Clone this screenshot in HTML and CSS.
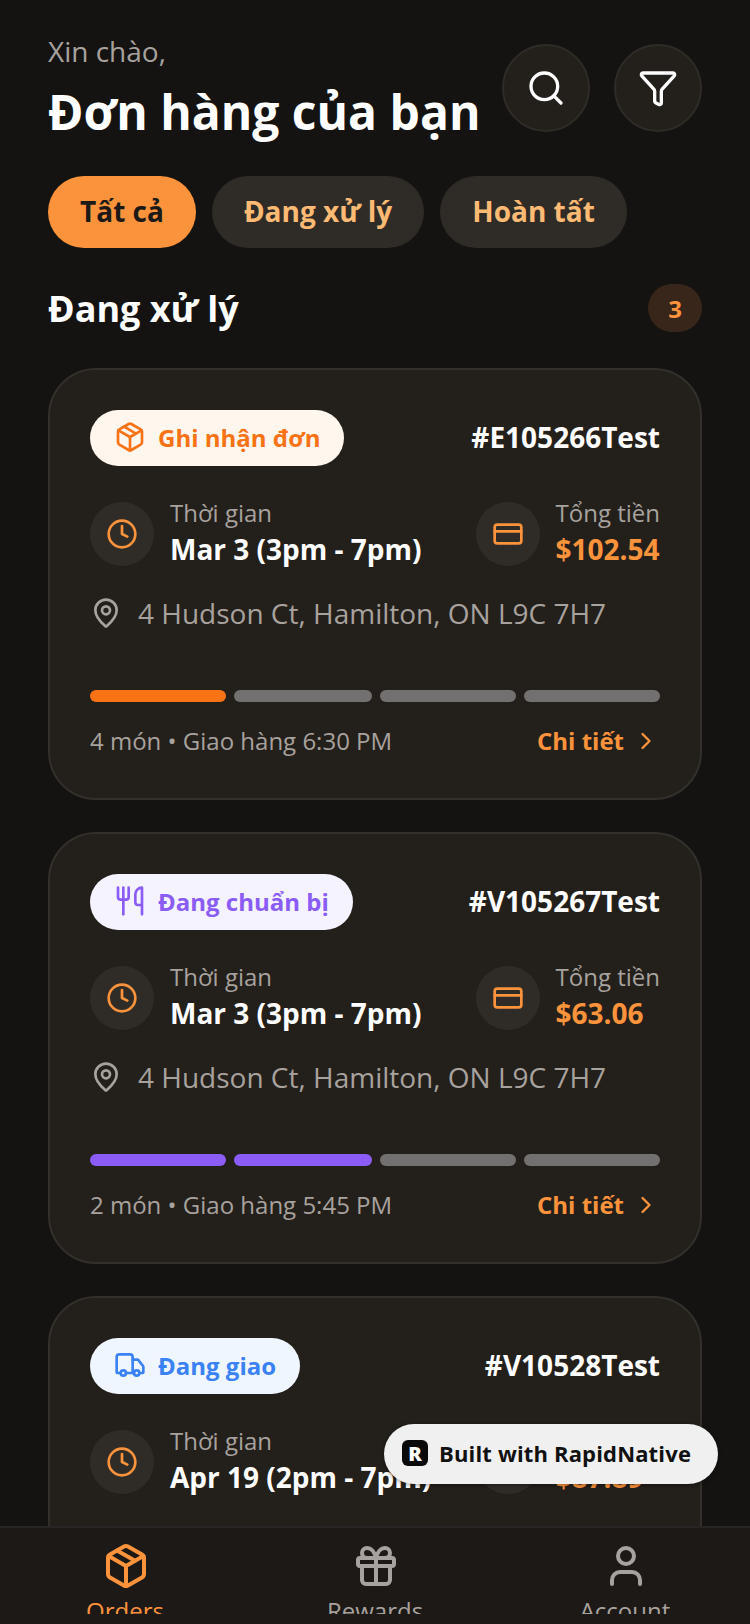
FILE: index.html
```html
<!DOCTYPE html>
<html lang="vi">
<head>
  <meta charset="UTF-8">
  <title>Đơn hàng của bạn</title>
  <link rel="stylesheet" href="styles.css">
</head>
<body>
  <svg class="sprite" width="0" height="0">
    <symbol id="i-package" viewBox="0 0 24 24"><path d="M11 21.73a2 2 0 0 0 2 0l7-4A2 2 0 0 0 21 16V8a2 2 0 0 0-1-1.73l-7-4a2 2 0 0 0-2 0l-7 4A2 2 0 0 0 3 8v8a2 2 0 0 0 1 1.73z"/><path d="M12 22V12"/><path d="m3.3 7 8.7 5 8.7-5"/><path d="m7.5 4.27 9 5.15"/></symbol>
    <symbol id="i-clock" viewBox="0 0 24 24"><circle cx="12" cy="12" r="10"/><path d="M12 6v6l4 2"/></symbol>
    <symbol id="i-card" viewBox="0 0 24 24"><rect x="2" y="5" width="20" height="14" rx="2"/><path d="M2 10h20"/></symbol>
    <symbol id="i-pin" viewBox="0 0 24 24"><path d="M20 10c0 4.993-5.539 10.193-7.399 11.799a1 1 0 0 1-1.202 0C9.539 20.193 4 14.993 4 10a8 8 0 0 1 16 0"/><circle cx="12" cy="10" r="3"/></symbol>
    <symbol id="i-chevron" viewBox="0 0 24 24"><path d="m9 18 6-6-6-6"/></symbol>
    <symbol id="i-utensils" viewBox="0 0 24 24"><path d="M3 2v7c0 1.1.9 2 2 2h4a2 2 0 0 0 2-2V2"/><path d="M7 2v20"/><path d="M21 15V2a5 5 0 0 0-5 5v6c0 1.1.9 2 2 2h3Zm0 0v7"/></symbol>
    <symbol id="i-truck" viewBox="0 0 24 24"><path d="M14 18V6a2 2 0 0 0-2-2H4a2 2 0 0 0-2 2v11a1 1 0 0 0 1 1h2"/><path d="M15 18H9"/><path d="M19 18h2a1 1 0 0 0 1-1v-3.65a1 1 0 0 0-.22-.624l-3.48-4.35A1 1 0 0 0 17.52 8H14"/><circle cx="17" cy="18" r="2"/><circle cx="7" cy="18" r="2"/></symbol>
  </svg>

  <main class="screen">
    <header class="top">
      <div>
        <p class="hello">Xin chào,</p>
        <h1 class="title">Đơn hàng của bạn</h1>
      </div>
      <div class="top-actions">
        <button class="round-btn" type="button">
          <svg class="icon icon-top" viewBox="0 0 24 24"><circle cx="11" cy="11" r="8"/><path d="m21 21-4.3-4.3"/></svg>
        </button>
        <button class="round-btn" type="button">
          <svg class="icon icon-top" viewBox="0 0 24 24"><path d="M10 20a1 1 0 0 0 .553.895l2 1A1 1 0 0 0 14 21v-7a2 2 0 0 1 .517-1.341L21.74 4.67A1 1 0 0 0 21 3H3a1 1 0 0 0-.742 1.67l7.225 7.989A2 2 0 0 1 10 14z"/></svg>
        </button>
      </div>
    </header>

    <div class="tabs">
      <span class="tab tab-active">Tất cả</span>
      <span class="tab">Đang xử lý</span>
      <span class="tab">Hoàn tất</span>
    </div>

    <div class="section-head">
      <h2>Đang xử lý</h2>
      <span class="count">3</span>
    </div>

    <article class="card">
      <div class="card-top">
        <span class="status status-orange"><svg class="icon icon-status"><use href="#i-package"/></svg>Ghi nhận đơn</span>
        <span class="order-id">#E105266Test</span>
      </div>
      <div class="info-row">
        <div class="info">
          <span class="info-icon"><svg class="icon icon-info"><use href="#i-clock"/></svg></span>
          <div class="info-text">
            <p class="info-label">Thời gian</p>
            <p class="info-value">Mar 3 (3pm - 7pm)</p>
          </div>
        </div>
        <div class="info">
          <span class="info-icon"><svg class="icon icon-info"><use href="#i-card"/></svg></span>
          <div class="info-text">
            <p class="info-label">Tổng tiền</p>
            <p class="info-value price">$102.54</p>
          </div>
        </div>
      </div>
      <div class="address"><svg class="icon icon-pin"><use href="#i-pin"/></svg>4 Hudson Ct, Hamilton, ON L9C 7H7</div>
      <div class="steps">
        <span class="step on-orange"></span>
        <span class="step"></span>
        <span class="step"></span>
        <span class="step"></span>
      </div>
      <div class="card-foot">
        <span class="foot-text">4 món • Giao hàng 6:30 PM</span>
        <span class="more">Chi tiết<svg class="icon icon-chevron"><use href="#i-chevron"/></svg></span>
      </div>
    </article>

    <article class="card">
      <div class="card-top">
        <span class="status status-purple"><svg class="icon icon-status"><use href="#i-utensils"/></svg>Đang chuẩn bị</span>
        <span class="order-id">#V105267Test</span>
      </div>
      <div class="info-row">
        <div class="info">
          <span class="info-icon"><svg class="icon icon-info"><use href="#i-clock"/></svg></span>
          <div class="info-text">
            <p class="info-label">Thời gian</p>
            <p class="info-value">Mar 3 (3pm - 7pm)</p>
          </div>
        </div>
        <div class="info">
          <span class="info-icon"><svg class="icon icon-info"><use href="#i-card"/></svg></span>
          <div class="info-text">
            <p class="info-label">Tổng tiền</p>
            <p class="info-value price">$63.06</p>
          </div>
        </div>
      </div>
      <div class="address"><svg class="icon icon-pin"><use href="#i-pin"/></svg>4 Hudson Ct, Hamilton, ON L9C 7H7</div>
      <div class="steps">
        <span class="step on-purple"></span>
        <span class="step on-purple"></span>
        <span class="step"></span>
        <span class="step"></span>
      </div>
      <div class="card-foot">
        <span class="foot-text">2 món • Giao hàng 5:45 PM</span>
        <span class="more">Chi tiết<svg class="icon icon-chevron"><use href="#i-chevron"/></svg></span>
      </div>
    </article>

    <article class="card">
      <div class="card-top">
        <span class="status status-blue"><svg class="icon icon-status"><use href="#i-truck"/></svg>Đang giao</span>
        <span class="order-id">#V10528Test</span>
      </div>
      <div class="info-row">
        <div class="info">
          <span class="info-icon"><svg class="icon icon-info"><use href="#i-clock"/></svg></span>
          <div class="info-text">
            <p class="info-label">Thời gian</p>
            <p class="info-value">Apr 19 (2pm - 7pm)</p>
          </div>
        </div>
        <div class="info">
          <span class="info-icon"><svg class="icon icon-info"><use href="#i-card"/></svg></span>
          <div class="info-text">
            <p class="info-label">Tổng tiền</p>
            <p class="info-value price">$87.89</p>
          </div>
        </div>
      </div>
    </article>
  </main>

  <nav class="tabbar">
    <div class="tabbar-item tabbar-active">
      <svg class="icon icon-nav"><use href="#i-package"/></svg>
      <span class="tabbar-label">Orders</span>
    </div>
    <div class="tabbar-item">
      <svg class="icon icon-nav" viewBox="0 0 24 24"><rect x="3" y="8" width="18" height="4" rx="1"/><path d="M12 8v13"/><path d="M19 12v7a2 2 0 0 1-2 2H7a2 2 0 0 1-2-2v-7"/><path d="M7.5 8a2.5 2.5 0 0 1 0-5A4.8 8 0 0 1 12 8a4.8 8 0 0 1 4.5-5 2.5 2.5 0 0 1 0 5"/></svg>
      <span class="tabbar-label">Rewards</span>
    </div>
    <div class="tabbar-item">
      <svg class="icon icon-nav" viewBox="0 0 24 24"><path d="M19 21v-2a4 4 0 0 0-4-4H9a4 4 0 0 0-4 4v2"/><circle cx="12" cy="7" r="4"/></svg>
      <span class="tabbar-label">Account</span>
    </div>
  </nav>

  <div class="built">
    <span class="built-logo">R</span>
    Built with RapidNative
  </div>
</body>
</html>
```

FILE: styles.css
```css
* {
  box-sizing: border-box;
}

body {
  position: relative;
  display: flex;
  flex-direction: column;
  width: 750px;
  height: 1624px;
  margin: 0;
  overflow: hidden;
  background-color: #141312;
  color: #fff;
  font-family: "Open Sans", "Noto Sans", sans-serif;
}

p,
h1,
h2 {
  margin: 0;
}

.sprite {
  position: absolute;
}

.icon {
  display: block;
  flex: none;
  fill: none;
  stroke: currentColor;
  stroke-linecap: round;
  stroke-linejoin: round;
  stroke-width: 2;
}

.screen {
  flex: 1;
  min-height: 0;
  padding: 30px 48px 0;
  overflow: hidden;
}

.top {
  display: flex;
  justify-content: space-between;
  align-items: center;
}

.hello {
  color: #a8a29e;
  font-size: 28px;
  line-height: 42px;
}

.title {
  margin-top: 6px;
  font-size: 48px;
  font-weight: 700;
  line-height: 68px;
}

.top-actions {
  display: flex;
  gap: 24px;
}

.round-btn {
  display: flex;
  justify-content: center;
  align-items: center;
  width: 88px;
  height: 88px;
  padding: 0;
  border: 2px solid #2f2c28;
  border-radius: 50%;
  background-color: #231f1b;
  color: #fff;
}

.icon-top {
  width: 40px;
  height: 40px;
}

.tabs {
  display: flex;
  gap: 16px;
  margin-top: 30px;
}

.tab {
  display: flex;
  align-items: center;
  height: 72px;
  padding: 0 32px 2px;
  border-radius: 36px;
  background-color: #2f2c27;
  color: #fdba74;
  font-size: 28px;
  font-weight: 700;
}

.tab-active {
  background-color: #fb923c;
  color: #1c1917;
}

.section-head {
  display: flex;
  justify-content: space-between;
  align-items: center;
  margin-top: 36px;
  margin-bottom: 36px;
}

.section-head h2 {
  padding-top: 2px;
  font-size: 36px;
  font-weight: 700;
  line-height: 46px;
}

.count {
  display: flex;
  justify-content: center;
  align-items: center;
  width: 54px;
  height: 48px;
  border-radius: 24px;
  background-color: #38261a;
  color: #fb923c;
  font-size: 24px;
  font-weight: 700;
}

.card {
  height: 432px;
  margin-bottom: 32px;
  padding: 40px;
  border: 2px solid #33302b;
  border-radius: 48px;
  background-color: #231f1b;
}

.card-top {
  display: flex;
  justify-content: space-between;
  align-items: center;
}

.status {
  display: flex;
  align-items: center;
  gap: 12px;
  height: 56px;
  padding: 0 24px 2px;
  border-radius: 28px;
  font-size: 24px;
  font-weight: 700;
}

.status-orange {
  background-color: #fff7ed;
  color: #f97316;
}

.status-purple {
  background-color: #f5f3ff;
  color: #8b5cf6;
}

.status-blue {
  background-color: #eff6ff;
  color: #3b82f6;
}

.icon-status {
  width: 32px;
  height: 32px;
}

.order-id {
  padding-bottom: 2px;
  font-size: 28px;
  font-weight: 700;
}

.info-row {
  display: flex;
  justify-content: space-between;
  margin-top: 30px;
}

.info {
  display: flex;
  align-items: center;
  gap: 16px;
}

.info-icon {
  display: flex;
  justify-content: center;
  align-items: center;
  width: 64px;
  height: 64px;
  border-radius: 50%;
  background-color: #2f2c28;
  color: #fb923c;
}

.icon-info {
  width: 32px;
  height: 32px;
}

.info-text {
  padding-bottom: 4px;
}

.info-label {
  color: #a8a29e;
  font-size: 24px;
  line-height: 34px;
}

.info-value {
  font-size: 28px;
  font-weight: 700;
  line-height: 38px;
}

.price {
  color: #fb923c;
}

.address {
  display: flex;
  align-items: center;
  gap: 16px;
  margin-top: 13px;
  color: #a8a29e;
  font-size: 28px;
  line-height: 56px;
}

.icon-pin {
  width: 32px;
  height: 32px;
}

.steps {
  display: grid;
  grid-template-columns: 136px 138px 136px 136px;
  gap: 8px;
  margin-top: 49px;
}

.step {
  height: 12px;
  border-radius: 6px;
  background-color: #737170;
}

.on-orange {
  background-color: #f97316;
}

.on-purple {
  background-color: #8b5cf6;
}

.card-foot {
  display: flex;
  justify-content: space-between;
  align-items: center;
  margin-top: 22px;
}

.foot-text {
  color: #a8a29e;
  font-size: 24px;
}

.more {
  display: flex;
  align-items: center;
  gap: 8px;
  color: #fb923c;
  font-size: 24px;
  font-weight: 700;
}

.icon-chevron {
  width: 28px;
  height: 28px;
}

.tabbar {
  display: flex;
  flex: none;
  justify-content: space-around;
  height: 98px;
  border-top: 2px solid #292524;
  background-color: #1c1917;
  color: #a8a29e;
}

.tabbar-item {
  display: flex;
  flex: 1;
  flex-direction: column;
  align-items: center;
  padding-top: 14px;
}

.tabbar-active {
  color: #fb923c;
}

.icon-nav {
  width: 48px;
  height: 48px;
  margin-left: 2px;
}

.tabbar-label {
  height: 20px;
  margin-top: 4px;
  overflow: hidden;
  font-size: 24px;
  line-height: 34px;
}

.built {
  position: absolute;
  top: 1424px;
  left: 384px;
  display: flex;
  align-items: center;
  gap: 11px;
  width: 334px;
  height: 60px;
  padding: 0 0 2px 18px;
  border-radius: 30px;
  background-color: #f0f0f0;
  box-shadow: 0 1px 4px rgba(0, 0, 0, 0.4);
  color: #111;
  font-size: 22px;
  font-weight: 700;
  letter-spacing: 0.16px;
}

.built-logo {
  display: flex;
  justify-content: center;
  align-items: center;
  width: 26px;
  height: 26px;
  border-radius: 6px;
  background-color: #0a0a0a;
  color: #fff;
  font-size: 20px;
  font-weight: 800;
}
```
